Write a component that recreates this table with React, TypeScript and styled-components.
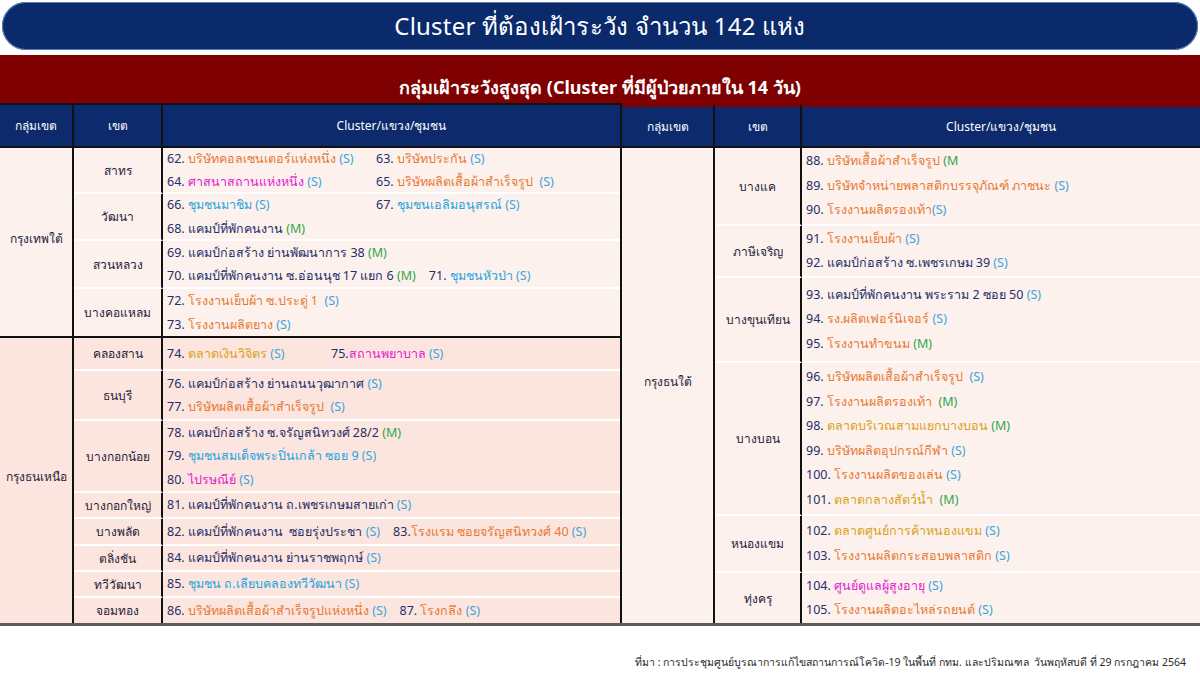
import React from 'react';
import styled, { createGlobalStyle } from 'styled-components';

type Tone = 'navy' | 'orange' | 'pink' | 'cyan' | 'gold';
type Kind = 'S' | 'M' | 'M(';

interface Entry {
  n: string;
  t: string;
  c: Tone;
  k: Kind;
  w?: number; // fixed width -> second entry aligned like a tab stop
  tight?: boolean; // no space after the number
  snug?: boolean; // no space before the tag
}

interface Row {
  district: string;
  h: number;
  lines: Entry[][];
}

interface Group {
  name: string;
  shade: 'light' | 'pink';
  rows: Row[];
}

const TONES: Record<Tone, string> = {
  navy: '#24306a',
  orange: '#e57a33',
  pink: '#e323d0',
  cyan: '#26a4de',
  gold: '#d9a11c',
};

const SHADES = {
  light: '#fdf1ed',
  pink: '#fce5de',
};

const GlobalStyle = createGlobalStyle`
  html, body {
    margin: 0;
    padding: 0;
    background: #ffffff;
  }
  body {
    font-family: 'Noto Sans', 'DejaVu Sans', 'Liberation Sans', sans-serif;
    width: 1200px;
    height: 675px;
    overflow: hidden;
  }
  * { box-sizing: border-box; }
`;

const Page = styled.div`
  display: flex;
  flex-direction: column;
  width: 1200px;
  height: 675px;
  padding-top: 2px;
`;

const TitlePill = styled.div`
  margin: 0 2px;
  height: 48px;
  border-radius: 24px;
  background: #0b2a6c;
  box-shadow: inset 0 0 0 1px #5f7cb8;
  display: flex;
  align-items: center;
  justify-content: center;
  color: #ffffff;
  font-size: 24px;
  letter-spacing: 0.2px;
`;

const RedBand = styled.div`
  margin-top: 5px;
  height: 48px;
  background: #7e0000;
  display: flex;
  align-items: flex-end;
  justify-content: center;
  padding-bottom: 1px;
  color: #ffffff;
  font-size: 18px;
  font-weight: bold;
`;

const Tables = styled.div`
  display: flex;
  border-bottom: 3px solid #5c5c5c;
`;

const Grid = styled.div<{ $cols: string; $w: number; $edge?: boolean }>`
  width: ${(p) => p.$w}px;
  display: grid;
  grid-template-columns: ${(p) => p.$cols};
  border-left: ${(p) => (p.$edge ? '2px solid #111' : 'none')};
`;

const HeadCell = styled.div<{ $last?: boolean; $drop?: number }>`
  height: 45px;
  background: #0c2a6c;
  color: #ffffff;
  font-size: 12px;
  display: flex;
  align-items: center;
  justify-content: center;
  border-top: ${(p) => (p.$drop ? `${p.$drop}px solid #7e0000` : '2px solid #111')};
  border-bottom: 2px solid #111;
  border-right: ${(p) => (p.$last ? 'none' : '2px solid #111')};
`;

const GroupCell = styled.div<{ $span: number; $shade: string; $bottom: boolean }>`
  grid-row: span ${(p) => p.$span};
  background: ${(p) => p.$shade};
  border-right: 2px solid #111;
  border-bottom: ${(p) => (p.$bottom ? '2px solid #111' : 'none')};
  display: flex;
  align-items: center;
  justify-content: center;
  padding-bottom: 8px;
  font-size: 12px;
  color: #1e1e3a;
`;

const DistrictCell = styled.div<{ $h: number; $shade: string; $sep: string }>`
  height: ${(p) => p.$h}px;
  background: ${(p) => p.$shade};
  border-right: 2px solid #111;
  border-bottom: ${(p) => (p.$sep === 'none' ? 'none' : `2px solid ${p.$sep}`)};
  display: flex;
  align-items: center;
  justify-content: center;
  font-size: 12px;
  color: #1e1e3a;
  white-space: nowrap;
`;

const ClusterCell = styled.div<{ $h: number; $shade: string; $sep: string; $lh: number }>`
  height: ${(p) => p.$h}px;
  background: ${(p) => p.$shade};
  border-bottom: ${(p) => (p.$sep === 'none' ? 'none' : `2px solid ${p.$sep}`)};
  display: flex;
  flex-direction: column;
  justify-content: center;
  padding-left: 4px;
  font-size: 12.5px;
  line-height: ${(p) => p.$lh}px;
  white-space: nowrap;
  overflow: hidden;
`;

const Line = styled.div`
  display: flex;
  gap: 13px;
`;

const Item = styled.span<{ $w?: number }>`
  display: inline-block;
  width: ${(p) => (p.$w ? `${p.$w}px` : 'auto')};
  flex: none;
`;

const Num = styled.span`
  color: #24306a;
`;

const Name = styled.span<{ $tone: Tone }>`
  color: ${(p) => TONES[p.$tone]};
`;

const Tag = styled.span<{ $kind: Kind }>`
  color: ${(p) => (p.$kind === 'S' ? '#3aa5dc' : '#2fa54c')};
`;

const Footer = styled.div`
  margin-top: 28px;
  padding-right: 14px;
  text-align: right;
  font-size: 10.5px;
  color: #2a2a2a;
`;

const LEFT: Group[] = [
  {
    name: 'กรุงเทพใต้',
    shade: 'light',
    rows: [
      {
        district: 'สาทร',
        h: 46,
        lines: [
          [
            { n: '62.', t: 'บริษัทคอลเซนเตอร์แห่งหนึ่ง', c: 'orange', k: 'S', w: 196 },
            { n: '63.', t: 'บริษัทประกัน', c: 'orange', k: 'S' },
          ],
          [
            { n: '64.', t: 'ศาสนาสถานแห่งหนึ่ง', c: 'pink', k: 'S', w: 196 },
            { n: '65.', t: 'บริษัทผลิตเสื้อผ้าสำเร็จรูป\u00a0', c: 'orange', k: 'S' },
          ],
        ],
      },
      {
        district: 'วัฒนา',
        h: 47,
        lines: [
          [
            { n: '66.', t: 'ชุมชนมาชิม', c: 'cyan', k: 'S', w: 196 },
            { n: '67.', t: 'ชุมชนเอลิมอนุสรณ์', c: 'cyan', k: 'S' },
          ],
          [{ n: '68.', t: 'แคมป์ที่พักคนงาน', c: 'navy', k: 'M' }],
        ],
      },
      {
        district: 'สวนหลวง',
        h: 48,
        lines: [
          [{ n: '69.', t: 'แคมป์ก่อสร้าง ย่านพัฒนาการ 38', c: 'navy', k: 'M' }],
          [
            { n: '70.', t: 'แคมป์ที่พักคนงาน ซ.อ่อนนุช 17 แยก 6', c: 'navy', k: 'M' },
            { n: '71.', t: 'ชุมชนหัวป่า', c: 'cyan', k: 'S' },
          ],
        ],
      },
      {
        district: 'บางคอแหลม',
        h: 49,
        lines: [
          [{ n: '72.', t: 'โรงงานเย็บผ้า ซ.ประดู่ 1\u00a0', c: 'orange', k: 'S' }],
          [{ n: '73.', t: 'โรงงานผลิตยาง', c: 'orange', k: 'S' }],
        ],
      },
    ],
  },
  {
    name: 'กรุงธนเหนือ',
    shade: 'pink',
    rows: [
      {
        district: 'คลองสาน',
        h: 33,
        lines: [
          [
            { n: '74.', t: 'ตลาดเงินวิจิตร', c: 'gold', k: 'S', w: 151 },
            { n: '75.', t: 'สถานพยาบาล', c: 'pink', k: 'S', tight: true },
          ],
        ],
      },
      {
        district: 'ธนบุรี',
        h: 50,
        lines: [
          [{ n: '76.', t: 'แคมป์ก่อสร้าง ย่านถนนวุฒากาศ', c: 'navy', k: 'S' }],
          [{ n: '77.', t: 'บริษัทผลิตเสื้อผ้าสำเร็จรูป\u00a0', c: 'orange', k: 'S' }],
        ],
      },
      {
        district: 'บางกอกน้อย',
        h: 72,
        lines: [
          [{ n: '78.', t: 'แคมป์ก่อสร้าง ซ.จรัญสนิทวงศ์ 28/2', c: 'navy', k: 'M' }],
          [{ n: '79.', t: 'ชุมชนสมเด็จพระปิ่นเกล้า ซอย 9', c: 'cyan', k: 'S' }],
          [{ n: '80.', t: 'ไปรษณีย์', c: 'pink', k: 'S' }],
        ],
      },
      {
        district: 'บางกอกใหญ่',
        h: 26,
        lines: [[{ n: '81.', t: 'แคมป์ที่พักคนงาน ถ.เพชรเกษมสายเก่า', c: 'navy', k: 'S' }]],
      },
      {
        district: 'บางพลัด',
        h: 27,
        lines: [
          [
            { n: '82.', t: 'แคมป์ที่พักคนงาน\u00a0 ซอยรุ่งประชา', c: 'navy', k: 'S' },
            { n: '83.', t: 'โรงแรม ซอยจรัญสนิทวงศ์ 40', c: 'orange', k: 'S', tight: true },
          ],
        ],
      },
      {
        district: 'ตลิ่งชัน',
        h: 26,
        lines: [[{ n: '84.', t: 'แคมป์ที่พักคนงาน ย่านราชพฤกษ์', c: 'navy', k: 'S' }]],
      },
      {
        district: 'ทวีวัฒนา',
        h: 26,
        lines: [[{ n: '85.', t: 'ชุมชน ถ.เลียบคลองทวีวัฒนา', c: 'cyan', k: 'S' }]],
      },
      {
        district: 'จอมทอง',
        h: 25,
        lines: [
          [
            { n: '86.', t: 'บริษัทผลิตเสื้อผ้าสำเร็จรูปแห่งหนึ่ง', c: 'orange', k: 'S' },
            { n: '87.', t: 'โรงกลึง', c: 'orange', k: 'S' },
          ],
        ],
      },
    ],
  },
];

const RIGHT: Group[] = [
  {
    name: 'กรุงธนใต้',
    shade: 'light',
    rows: [
      {
        district: 'บางแค',
        h: 78,
        lines: [
          [{ n: '88.', t: 'บริษัทเสื้อผ้าสำเร็จรูป', c: 'orange', k: 'M(' }],
          [{ n: '89.', t: 'บริษัทจำหน่ายพลาสติกบรรจุภัณฑ์ ภาชนะ', c: 'orange', k: 'S' }],
          [{ n: '90.', t: 'โรงงานผลิตรองเท้า', c: 'orange', k: 'S', snug: true }],
        ],
      },
      {
        district: 'ภาษีเจริญ',
        h: 52,
        lines: [
          [{ n: '91.', t: 'โรงงานเย็บผ้า', c: 'orange', k: 'S' }],
          [{ n: '92.', t: 'แคมป์ก่อสร้าง ซ.เพชรเกษม 39', c: 'navy', k: 'S' }],
        ],
      },
      {
        district: 'บางขุนเทียน',
        h: 85,
        lines: [
          [{ n: '93.', t: 'แคมป์ที่พักคนงาน พระราม 2 ซอย 50', c: 'navy', k: 'S' }],
          [{ n: '94.', t: 'รง.ผลิตเฟอร์นิเจอร์', c: 'orange', k: 'S' }],
          [{ n: '95.', t: 'โรงงานทำขนม', c: 'orange', k: 'M' }],
        ],
      },
      {
        district: 'บางบอน',
        h: 153,
        lines: [
          [{ n: '96.', t: 'บริษัทผลิตเสื้อผ้าสำเร็จรูป\u00a0', c: 'orange', k: 'S' }],
          [{ n: '97.', t: 'โรงงานผลิตรองเท้า\u00a0', c: 'orange', k: 'M' }],
          [{ n: '98.', t: 'ตลาดบริเวณสามแยกบางบอน', c: 'gold', k: 'M' }],
          [{ n: '99.', t: 'บริษัทผลิตอุปกรณ์กีฬา', c: 'orange', k: 'S' }],
          [{ n: '100.', t: 'โรงงานผลิตของเล่น', c: 'orange', k: 'S' }],
          [{ n: '101.', t: 'ตลาดกลางสัตว์น้ำ\u00a0', c: 'gold', k: 'M' }],
        ],
      },
      {
        district: 'หนองแขม',
        h: 57,
        lines: [
          [{ n: '102.', t: 'ตลาดศูนย์การค้าหนองแขม', c: 'gold', k: 'S' }],
          [{ n: '103.', t: 'โรงงานผลิตกระสอบพลาสติก', c: 'orange', k: 'S' }],
        ],
      },
      {
        district: 'ทุ่งครุ',
        h: 50,
        lines: [
          [{ n: '104.', t: 'ศูนย์ดูแลผู้สูงอายุ', c: 'pink', k: 'S' }],
          [{ n: '105.', t: 'โรงงานผลิตอะไหล่รถยนต์', c: 'orange', k: 'S' }],
        ],
      },
    ],
  },
];

const EntryView: React.FC<{ e: Entry }> = ({ e }) => (
  <Item $w={e.w}>
    <Num>{e.n}</Num>
    {e.tight ? '' : ' '}
    <Name $tone={e.c}>{e.t}</Name>
    {e.snug ? '' : ' '}
    <Tag $kind={e.k}>{e.k === 'M(' ? '(M' : `(${e.k})`}</Tag>
  </Item>
);

const ClusterTable: React.FC<{
  groups: Group[];
  width: number;
  cols: string;
  lh: number;
  edge?: boolean;
  drop?: number;
}> = ({ groups, width, cols, lh, edge, drop }) => (
  <Grid $cols={cols} $w={width} $edge={edge}>
    <HeadCell $drop={drop}>กลุ่มเขต</HeadCell>
    <HeadCell $drop={drop}>เขต</HeadCell>
    <HeadCell $drop={drop} $last>
      Cluster/แขวง/ชุมชน
    </HeadCell>
    {groups.map((g, gi) => {
      const lastGroup = gi === groups.length - 1;
      const shade = SHADES[g.shade];
      return (
        <React.Fragment key={g.name}>
          <GroupCell $span={g.rows.length} $shade={shade} $bottom={!lastGroup}>
            {g.name}
          </GroupCell>
          {g.rows.map((r, ri) => {
            const lastRow = ri === g.rows.length - 1;
            const sep = lastRow ? (lastGroup ? 'none' : '#111') : '#ffffff';
            return (
              <React.Fragment key={r.district}>
                <DistrictCell $h={r.h} $shade={shade} $sep={sep}>
                  {r.district}
                </DistrictCell>
                <ClusterCell $h={r.h} $shade={shade} $sep={sep} $lh={lh}>
                  {r.lines.map((line, li) => (
                    <Line key={li}>
                      {line.map((e) => (
                        <EntryView key={e.n} e={e} />
                      ))}
                    </Line>
                  ))}
                </ClusterCell>
              </React.Fragment>
            );
          })}
        </React.Fragment>
      );
    })}
  </Grid>
);

const App: React.FC = () => (
  <>
    <GlobalStyle />
    <Page>
      <TitlePill>Cluster ที่ต้องเฝ้าระวัง จำนวน 142 แห่ง</TitlePill>
      <RedBand>กลุ่มเฝ้าระวังสูงสุด (Cluster ที่มีผู้ป่วยภายใน 14 วัน)</RedBand>
      <Tables>
        <ClusterTable groups={LEFT} width={620} cols="74px 89px 1fr" lh={23.5} />
        <ClusterTable groups={RIGHT} width={580} cols="93px 87px 1fr" lh={24.5} edge drop={4} />
      </Tables>
      <Footer>
        ที่มา : การประชุมศูนย์บูรณาการแก้ไขสถานการณ์โควิด-19 ในพื้นที่ กทม. และปริมณฑล&nbsp; วันพฤหัสบดี ที่ 29 กรกฎาคม 2564
      </Footer>
    </Page>
  </>
);

export default App;
